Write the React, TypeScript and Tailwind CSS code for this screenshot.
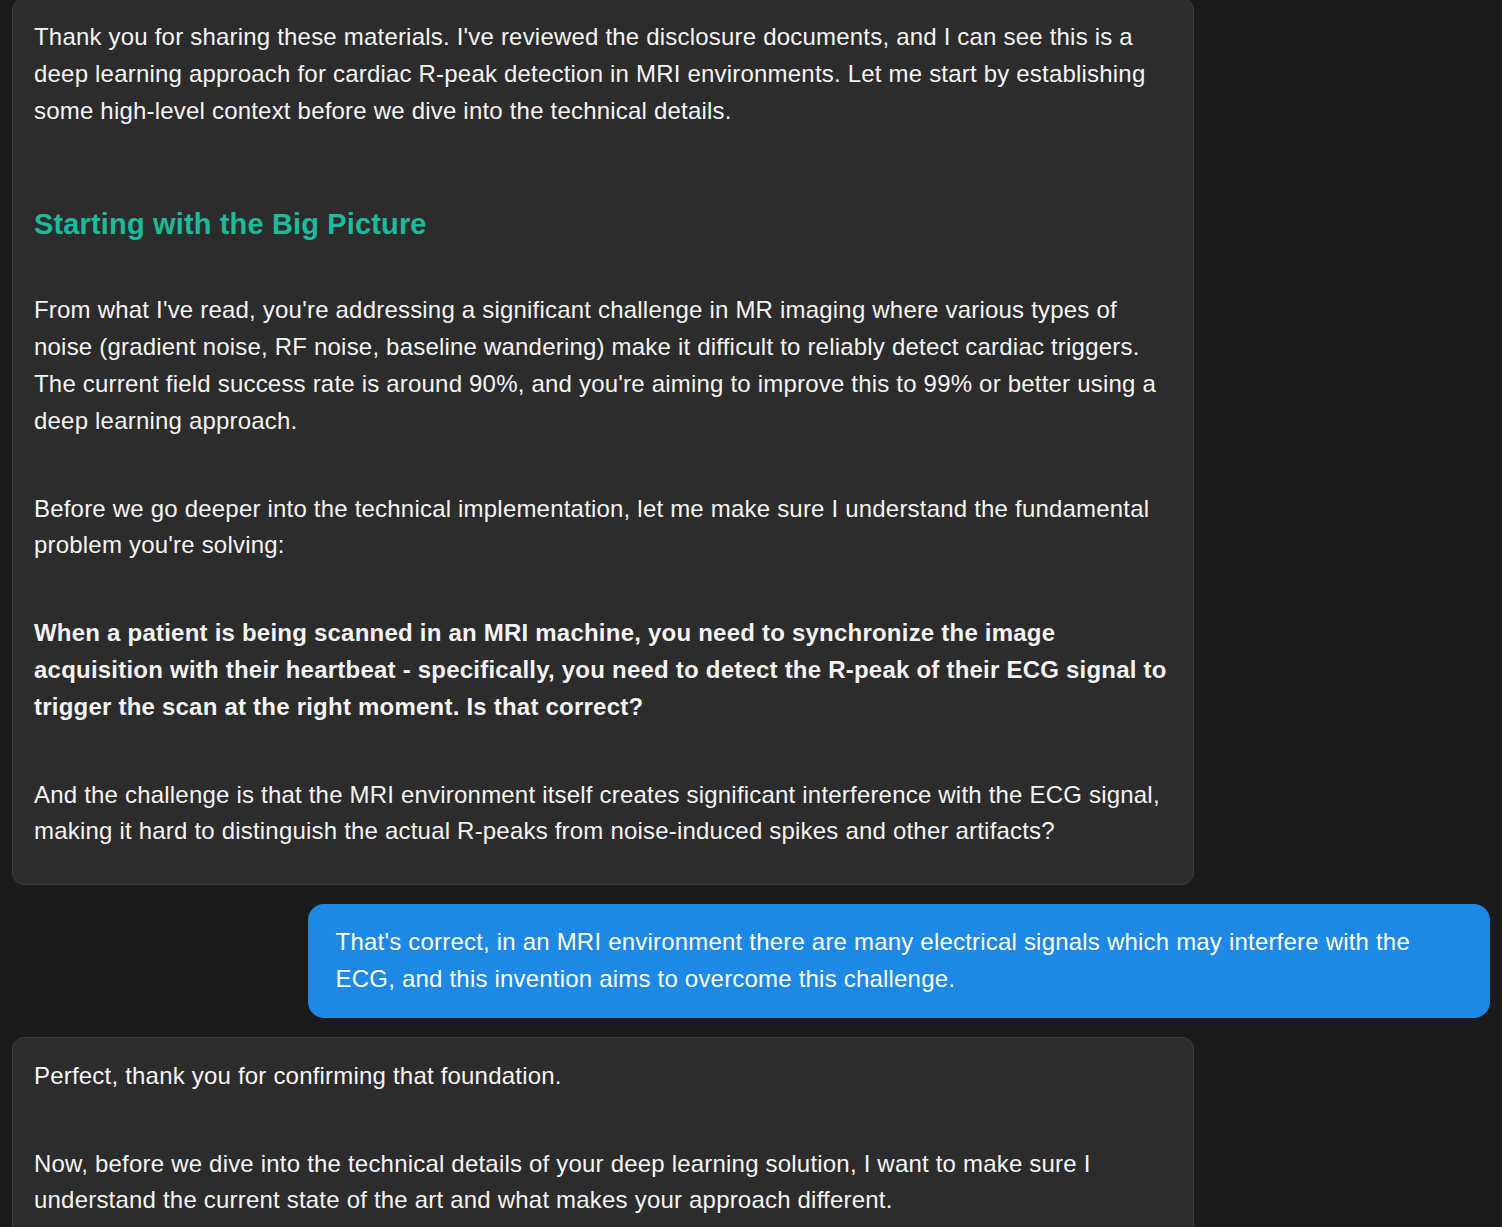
import React from 'react';

type Block =
    | { kind: 'p'; lines: string[]; bold?: boolean }
    | { kind: 'h'; text: string };

interface Message {
    role: 'assistant' | 'user';
    blocks: Block[];
}

// lines are kept as in the transcript so wrapping matches the chat view
const messages: Message[] = [
    {
        role: 'assistant',
        blocks: [
            {
                kind: 'p',
                lines: [
                    "Thank you for sharing these materials. I've reviewed the disclosure documents, and I can see this is a",
                    'deep learning approach for cardiac R-peak detection in MRI environments. Let me start by establishing',
                    'some high-level context before we dive into the technical details.',
                ],
            },
            { kind: 'h', text: 'Starting with the Big Picture' },
            {
                kind: 'p',
                lines: [
                    "From what I've read, you're addressing a significant challenge in MR imaging where various types of",
                    'noise (gradient noise, RF noise, baseline wandering) make it difficult to reliably detect cardiac triggers.',
                    "The current field success rate is around 90%, and you're aiming to improve this to 99% or better using a",
                    'deep learning approach.',
                ],
            },
            {
                kind: 'p',
                lines: [
                    'Before we go deeper into the technical implementation, let me make sure I understand the fundamental',
                    "problem you're solving:",
                ],
            },
            {
                kind: 'p',
                bold: true,
                lines: [
                    'When a patient is being scanned in an MRI machine, you need to synchronize the image',
                    'acquisition with their heartbeat - specifically, you need to detect the R-peak of their ECG signal to',
                    'trigger the scan at the right moment. Is that correct?',
                ],
            },
            {
                kind: 'p',
                lines: [
                    'And the challenge is that the MRI environment itself creates significant interference with the ECG signal,',
                    'making it hard to distinguish the actual R-peaks from noise-induced spikes and other artifacts?',
                ],
            },
        ],
    },
    {
        role: 'user',
        blocks: [
            {
                kind: 'p',
                lines: [
                    "That's correct, in an MRI environment there are many electrical signals which may interfere with the",
                    'ECG, and this invention aims to overcome this challenge.',
                ],
            },
        ],
    },
    {
        role: 'assistant',
        blocks: [
            { kind: 'p', lines: ['Perfect, thank you for confirming that foundation.'] },
            {
                kind: 'p',
                lines: [
                    'Now, before we dive into the technical details of your deep learning solution, I want to make sure I',
                    'understand the current state of the art and what makes your approach different.',
                ],
            },
        ],
    },
];

const MessageBody: React.FC<{ blocks: Block[] }> = ({ blocks }) => (
    <div className="flex flex-col">
        {blocks.map((b, i) => {
            if (b.kind === 'h') {
                return (
                    <h2 key={i} className="mt-[77px] mb-[50px] text-[29px] leading-[36px] font-bold tracking-[0.15px] text-[#1abc9c]">
                        {b.text}
                    </h2>
                );
            }
            const prevIsHeading = i > 0 && blocks[i - 1].kind === 'h';
            return (
                <p key={i} className={`whitespace-nowrap ${i > 0 && !prevIsHeading ? 'mt-[51px]' : ''} ${b.bold ? 'font-bold tracking-[0.22px]' : ''}`}>
                    {b.lines.map((line, j) => (
                        <React.Fragment key={j}>
                            {j > 0 && <br />}
                            {line}
                        </React.Fragment>
                    ))}
                </p>
            );
        })}
    </div>
);

const App: React.FC = () => {
    return (
        <div className="min-h-screen bg-[#1b1b1b] px-3 overflow-hidden text-[24px] leading-[36.8px] tracking-[0.2px] text-[#f4f4f4]" style={{ fontFamily: '"Liberation Sans", Arial, sans-serif' }}>
            <div className="flex flex-col gap-[19px] -mt-[2px]">
                {messages.map((m, i) =>
                    m.role === 'assistant' ? (
                        <div key={i} className="w-[80%] bg-[#2c2c2c] border border-[#3d3d3d] rounded-xl pl-[21px] pr-[20px] pt-[20px] pb-[34px] overflow-hidden">
                            <MessageBody blocks={m.blocks} />
                        </div>
                    ) : (
                        <div key={i} className="w-[80%] self-end bg-[#1e88e5] text-white rounded-2xl pl-[28px] pr-[28px] pt-[20px] pb-[20px] overflow-hidden">
                            <MessageBody blocks={m.blocks} />
                        </div>
                    )
                )}
            </div>
        </div>
    );
};

export default App;
